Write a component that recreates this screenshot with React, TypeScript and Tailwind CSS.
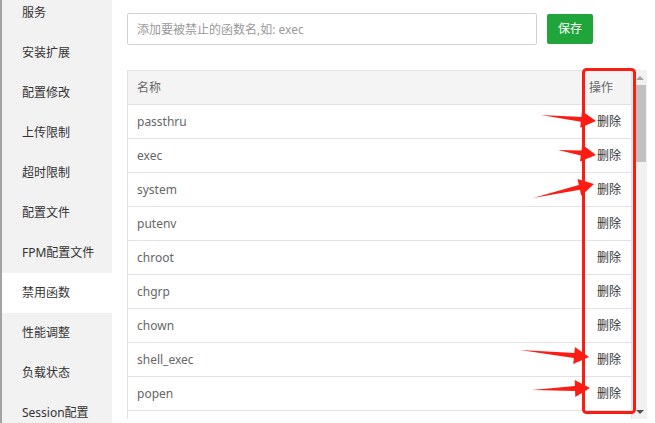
import React from "react";

const menu = [
  "服务",
  "安装扩展",
  "配置修改",
  "上传限制",
  "超时限制",
  "配置文件",
  "FPM配置文件",
  "禁用函数",
  "性能调整",
  "负载状态",
  "Session配置",
];

const funcs = [
  "passthru",
  "exec",
  "system",
  "putenv",
  "chroot",
  "chgrp",
  "chown",
  "shell_exec",
  "popen",
];

// red annotation arrows: tail -> tip
const arrows: [number, number, number, number][] = [
  [541, 115, 596, 121],
  [558, 150, 596, 155],
  [533, 198, 594, 184],
  [520, 350, 589, 357],
  [532, 390, 590, 388],
];

function arrowPoints(x1: number, y1: number, x2: number, y2: number) {
  const dx = x2 - x1;
  const dy = y2 - y1;
  const len = Math.sqrt(dx * dx + dy * dy);
  const ux = dx / len;
  const uy = dy / len;
  const nx = -uy;
  const ny = ux;
  const headLen = 15;
  const headW = 8.5;
  const shaftW = 2.5;
  const bx = x2 - ux * headLen;
  const by = y2 - uy * headLen;
  const pts = [
    [x1, y1],
    [bx + nx * shaftW, by + ny * shaftW],
    [bx + nx * headW, by + ny * headW],
    [x2, y2],
    [bx - nx * headW, by - ny * headW],
    [bx - nx * shaftW, by - ny * shaftW],
  ];
  return pts.map((p) => p.join(",")).join(" ");
}

export default function App() {
  return (
    <div
      className="relative flex w-[655px] h-[423px] overflow-hidden bg-white text-[12px]"
      style={{ fontFamily: '"Noto Sans", "Noto Sans CJK SC", sans-serif' }}
    >
      <div className="w-[2px] shrink-0 bg-[#a3a3a3]" />
      <div className="w-[110px] shrink-0 bg-[#f2f2f2]">
        <ul className="mt-[-7px]">
          {menu.map((m) => (
            <li
              key={m}
              className={`h-[40px] flex items-center pl-[20px] text-[#333] ${
                m === "禁用函数" ? "bg-white" : ""
              }`}
            >
              {m}
            </li>
          ))}
        </ul>
      </div>

      <div className="flex-1 pl-[15px] pt-[13px]">
        <div className="flex items-center gap-[10px]">
          <input
            className="w-[410px] h-[32px] border border-[#d2d2d2] rounded-[2px] px-[9px] text-[12px] text-[#333] placeholder:text-[#999] outline-none"
            placeholder="添加要被禁止的函数名,如: exec"
          />
          <button className="w-[46px] h-[30px] bg-[#20a53a] rounded-[2px] text-white text-[12px]">
            保存
          </button>
        </div>

        <div className="mt-[25px] flex h-[349px] overflow-hidden">
          <div className="w-[505px] border-t border-l border-r border-[#e2e2e2]">
            <div className="flex h-[34px] items-center bg-[#f4f4f4] border-b border-[#e2e2e2] text-[#666]">
              <span className="flex-1 pl-[9px]">名称</span>
              <span className="pr-[18px]">操作</span>
            </div>
            {funcs.map((f) => (
              <div
                key={f}
                className="flex h-[34px] items-center border-b border-[#e2e2e2]"
              >
                <span className="flex-1 pl-[9px] text-[#666]">{f}</span>
                <span className="pr-[10px] text-[#333]">删除</span>
              </div>
            ))}
            <div className="h-[34px]" />
          </div>
          <div className="w-[15px] bg-[#f1f1f1] flex flex-col items-center">
            <div className="h-[15px] flex items-center justify-center">
              <div className="w-0 h-0 border-l-[4px] border-r-[4px] border-b-[4px] border-l-transparent border-r-transparent border-b-[#a3a3a3]" />
            </div>
            <div className="w-[12px] h-[77px] bg-[#c1c1c1]" />
            <div className="flex-1" />
            <div className="h-[15px] flex items-center justify-center">
              <div className="w-0 h-0 border-l-[4px] border-r-[4px] border-t-[4px] border-l-transparent border-r-transparent border-t-[#505050]" />
            </div>
          </div>
        </div>
      </div>

      <svg
        className="absolute inset-0 pointer-events-none"
        width="655"
        height="423"
      >
        <rect
          x="583.5"
          y="69.5"
          width="51"
          height="343"
          rx="3"
          fill="none"
          stroke="#fd1c13"
          strokeWidth="3"
        />
        {arrows.map((a, i) => (
          <polygon key={i} points={arrowPoints(...a)} fill="#fd1c13" />
        ))}
      </svg>
    </div>
  );
}
